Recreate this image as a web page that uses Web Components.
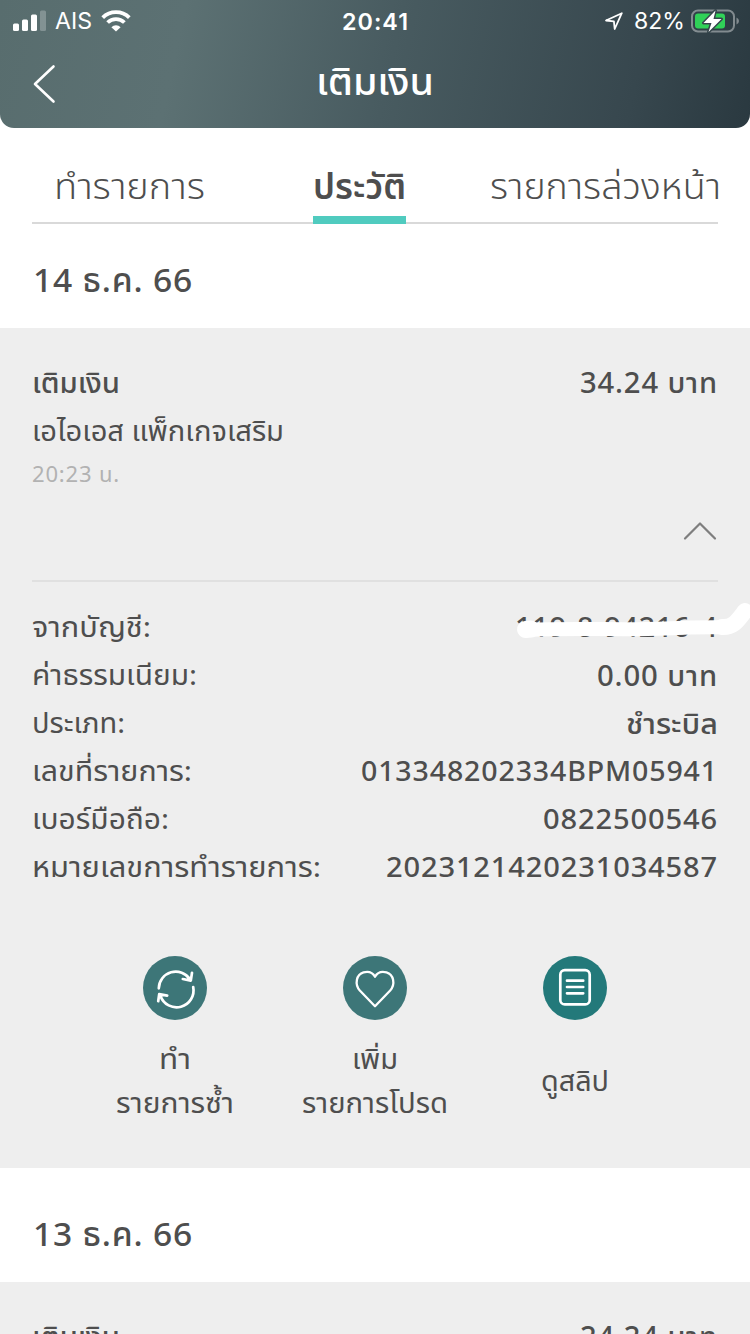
<!DOCTYPE html>
<html lang="th">
<head>
<meta charset="utf-8">
<title>เติมเงิน</title>
<style>
  body {
    margin: 0;
    width: 750px;
    height: 1334px;
    overflow: hidden;
    background: #fff;
    color: #4e4e4e;
    font-family: "Noto Sans", "Noto Sans Thai", "Open Sans", sans-serif;
  }
</style>
</head>
<body>
<topup-screen></topup-screen>

<script>
// Single line of text squeezed or stretched to the width it is given
class TextRun extends HTMLElement {
  constructor() {
    super();
    this.attachShadow({ mode: 'open' });
    this.shadowRoot.innerHTML = `
      <style>
        :host { display: inline-block; white-space: nowrap; flex: none; }
        span { display: inline-block; transform-origin: 0 50%; }
      </style>
      <span><slot></slot></span>
    `;
  }
  connectedCallback() {
    const width = Number(this.getAttribute('width'));
    const size = this.getAttribute('size');
    const weight = this.getAttribute('weight');
    const spacing = this.getAttribute('spacing');
    if (size) this.style.fontSize = `${size}px`;
    if (weight) this.style.fontWeight = weight;
    if (spacing) this.style.letterSpacing = `${spacing}px`;
    if (!width) return;
    const span = this.shadowRoot.querySelector('span');
    const natural = span.getBoundingClientRect().width;
    this.style.width = `${width}px`;
    if (natural) span.style.transform = `scaleX(${width / natural})`;
  }
}
customElements.define('text-run', TextRun);

class StatusBar extends HTMLElement {
  constructor() {
    super();
    this.attachShadow({ mode: 'open' });
    this.shadowRoot.innerHTML = `
      <style>
        :host {
          display: grid;
          grid-template-columns: 1fr auto 1fr;
          align-items: center;
          height: 40px;
          padding: 0 11px 0 13px;
          line-height: 40px;
          color: #fff;
          font-family: Inter, "Liberation Sans", sans-serif;
        }
        div { display: flex; align-items: center; }
        svg { display: block; flex: none; }
        .left { gap: 9px; }
        .time { margin: 2px 2px 0 0; }
        .right { justify-content: flex-end; }
        .arrow { margin-right: 11px; }
        .battery { margin-left: 6px; }
      </style>
      <div class="left">
        <svg width="33" height="22" viewBox="0 0 33 22" fill="#fff">
          <rect x="0" y="13.500" width="6" height="7.500" rx="1.500"/>
          <rect x="9" y="9.500" width="6" height="11.500" rx="1.500"/>
          <rect x="18" y="4.500" width="6" height="16.500" rx="1.500"/>
          <rect x="27" y="0.500" width="6" height="20.500" rx="1.500" opacity=".25"/>
        </svg>
        <text-run size="23" width="37">AIS</text-run>
        <svg width="30" height="22" viewBox="0 0 30 22" fill="none" stroke="#fff" stroke-width="3.800">
          <path d="M1.700 7.600a19 19 0 0 1 26.600 0"/>
          <path d="M6.600 12.500a12 12 0 0 1 16.800 0"/>
          <path d="M15 21.600l-4.600-4.400a6.500 6.500 0 0 1 9.200 0z" fill="#fff" stroke="none"/>
        </svg>
      </div>
      <text-run class="time" size="23" weight="600" spacing="1" width="67">20:41</text-run>
      <div class="right">
        <svg class="arrow" width="18" height="18" viewBox="0 0 18 18" fill="none" stroke="#fff" stroke-width="1.800" stroke-linejoin="round">
          <path d="M1 8.500L16.800 1.200 9.700 17 8.900 9.300z"/>
        </svg>
        <text-run size="23" width="51">82%</text-run>
        <svg class="battery" width="48" height="24" viewBox="0 0 48 24">
          <rect x="1" y="1.500" width="42" height="21" rx="6" fill="none" stroke="#fff" stroke-opacity=".4" stroke-width="2"/>
          <path d="M45.500 8.500v7q2.500-1 2.500-3.500t-2.500-3.500z" fill="#fff" fill-opacity=".4"/>
          <rect x="4" y="4.500" width="30" height="15" rx="3" fill="#30d158"/>
          <path d="M24.500 1.500L12.500 14h8l-3 9L30.500 10h-8z" fill="#fff" stroke="#36464c" stroke-width="3" paint-order="stroke" stroke-linejoin="round"/>
        </svg>
      </div>
    `;
  }
}
customElements.define('status-bar', StatusBar);

class AppHeader extends HTMLElement {
  constructor() {
    super();
    this.attachShadow({ mode: 'open' });
    this.shadowRoot.innerHTML = `
      <style>
        :host {
          display: block;
          height: 128px;
          border-radius: 0 0 14px 14px;
          background: linear-gradient(102deg, #586d6e 0%, #5c7173 24%, #485b60 52%, #37474e 84%, #2a3940 100%);
          color: #fff;
        }
        nav {
          display: grid;
          grid-template-columns: 150px 1fr 150px;
          align-items: center;
          justify-items: center;
          height: 88px;
        }
        svg { justify-self: start; margin-left: 32px; }
        text-run { margin-bottom: 2px; }
      </style>
      <status-bar></status-bar>
      <nav>
        <svg width="24" height="40" viewBox="0 0 24 40" fill="none" stroke="#fff" stroke-width="2.600" stroke-linecap="round" stroke-linejoin="round">
          <path d="M21.500 2.500L3 20l18.500 17.500"/>
        </svg>
        <text-run size="38" weight="500" width="118"><slot></slot></text-run>
      </nav>
    `;
  }
}
customElements.define('app-header', AppHeader);

class TabBar extends HTMLElement {
  constructor() {
    super();
    this.attachShadow({ mode: 'open' });
    this.shadowRoot.innerHTML = `
      <style>
        :host {
          display: grid;
          grid-template-columns: 259px 177px 230px;
          justify-items: start;
          box-sizing: border-box;
          height: 96px;
          margin: 0 32px;
          padding-left: 22px;
          border-bottom: 2px solid #d9d9d9;
        }
      </style>
      <slot></slot>
    `;
  }
}
customElements.define('tab-bar', TabBar);

class TabItem extends HTMLElement {
  constructor() {
    super();
    this.attachShadow({ mode: 'open' });
    this.shadowRoot.innerHTML = `
      <style>
        :host {
          display: block;
          box-sizing: border-box;
          height: 96px;
          padding-top: 29px;
          line-height: 58px;
          font-weight: 300;
        }
        :host([selected]) { border-bottom: 8px solid #50cbbf; }
      </style>
      <slot></slot>
    `;
  }
}
customElements.define('tab-item', TabItem);

class DateHeading extends HTMLElement {
  constructor() {
    super();
    this.attachShadow({ mode: 'open' });
    this.shadowRoot.innerHTML = `
      <style>
        :host {
          display: block;
          height: 104px;
          padding-left: 33px;
          line-height: 112px;
        }
        :host([compact]) { height: 114px; line-height: 132px; }
      </style>
      <text-run size="33" weight="500" spacing=".8" width="160"><slot></slot></text-run>
    `;
  }
}
customElements.define('date-heading', DateHeading);

class TransactionCard extends HTMLElement {
  constructor() {
    super();
    this.attachShadow({ mode: 'open' });
    this.shadowRoot.innerHTML = `
      <style>
        :host {
          display: block;
          box-sizing: border-box;
          height: 840px;
          padding: 30px 32px 0;
          background: #eee;
        }
        .line { display: flex; justify-content: space-between; height: 48px; line-height: 48px; }
        .time { height: 40px; line-height: 38px; color: #b2b2b2; }
        .toggle {
          display: flex;
          justify-content: flex-end;
          box-sizing: border-box;
          height: 88px;
          padding-top: 26px;
          border-bottom: 2px solid #e0e0e0;
        }
        .details { padding-top: 20px; }
      </style>
      <div class="line">
        <text-run size="28" weight="500" width="88">เติมเงิน</text-run>
        <text-run size="28" weight="500" spacing=".8" width="138"><slot name="amount"></slot></text-run>
      </div>
      <div class="line"><text-run size="28" width="252">เอไอเอส แพ็กเกจเสริม</text-run></div>
      <div class="time"><text-run size="22" spacing=".8" width="88">20:23 น.</text-run></div>
      <div class="toggle">
        <svg width="36" height="22" viewBox="0 0 36 22" fill="none" stroke="#7e7e7e" stroke-width="2.200" stroke-linecap="round" stroke-linejoin="round">
          <path d="M3 18.500L18 3.500l15 15"/>
        </svg>
      </div>
      <div class="details"><slot></slot></div>
      <slot name="actions"></slot>
    `;
  }
}
customElements.define('transaction-card', TransactionCard);

class DetailRow extends HTMLElement {
  constructor() {
    super();
    this.attachShadow({ mode: 'open' });
    this.shadowRoot.innerHTML = `
      <style>
        :host { display: flex; justify-content: space-between; position: relative; height: 48px; line-height: 48px; }
        ::slotted([slot="value"]) { margin-top: 1px; }
        ::slotted(svg) { position: absolute; left: 483px; top: 0; }
      </style>
      <slot></slot>
      <slot name="value"></slot>
      <slot name="marker"></slot>
    `;
  }
}
customElements.define('detail-row', DetailRow);

class ActionButton extends HTMLElement {
  constructor() {
    super();
    this.attachShadow({ mode: 'open' });
    const icons = {
      repeat: '<path d="M15.800 32.300A17 17 0 0 1 47 23.300M39.800 23l8 1.600 1.200-7.800M50.200 31A17 17 0 0 1 17.500 40M24.200 39.600l-8-1.400-1 7"/>',
      heart: '<path stroke-width="2.300" d="M32 50.200L16.800 34.500C11.300 28 13.400 18.300 20.500 16.300c5-1.300 9.300.3 11.500 4.400 2.200-4.100 6.500-5.700 11.500-4.400 7.100 2 9.200 11.700 3.700 18.200z"/>',
      slip: '<rect x="17.300" y="14.200" width="29.400" height="34.200" rx="4.500"/><path d="M24 24.700h16.200M24 31h16.200M24 37.300h16.200"/>'
    };
    const name = this.getAttribute('icon');
    this.shadowRoot.innerHTML = `
      <style>
        :host { display: flex; flex-direction: column; align-items: center; width: 200px; }
        svg { display: block; border-radius: 50%; background: ${name === 'slip' ? '#23797a' : '#3d7678'}; }
        .label {
          display: flex;
          flex-direction: column;
          align-items: center;
          justify-content: center;
          height: 88px;
          margin-top: 16px;
          line-height: 44px;
        }
      </style>
      <svg width="64" height="64" viewBox="0 0 64 64" fill="none" stroke="#fff" stroke-width="2.700" stroke-linecap="round" stroke-linejoin="round">${icons[name]}</svg>
      <div class="label"><slot></slot></div>
    `;
  }
}
customElements.define('action-button', ActionButton);

class TopupScreen extends HTMLElement {
  constructor() {
    super();
    this.attachShadow({ mode: 'open' });
    this.shadowRoot.innerHTML = `
      <style>
        :host { display: block; height: 1334px; overflow: hidden; }
        .actions { display: flex; margin: 66px 11px 0 43px; }
        .peek { height: 52px; overflow: hidden; }
      </style>
      <app-header>เติมเงิน</app-header>
      <tab-bar>
        <tab-item><text-run size="36" width="151">ทำรายการ</text-run></tab-item>
        <tab-item selected><text-run size="36" weight="600" width="93">ประวัติ</text-run></tab-item>
        <tab-item><text-run size="36" width="231">รายการล่วงหน้า</text-run></tab-item>
      </tab-bar>
      <date-heading>14 ธ.ค. 66</date-heading>
      <transaction-card>
        <span slot="amount">34.24 บาท</span>
        <detail-row>
          <text-run size="28" width="119">จากบัญชี:</text-run>
          <text-run slot="value" size="27" weight="500" spacing=".8" width="203">119-8-94216-4</text-run>
          <svg slot="marker" width="235" height="48" viewBox="0 0 235 48" fill="none" stroke="#fff" stroke-linecap="round" stroke-linejoin="round">
            <path stroke-width="17" d="M10.500 27.500L16 27"/>
            <path stroke-width="14" d="M12 28C60 25.500 110 28.500 150 26.500S195 25.500 213 25"/>
            <path stroke-width="16" d="M207 25C219 25.500 223 18 230 9"/>
          </svg>
        </detail-row>
        <detail-row>
          <text-run size="28" width="165">ค่าธรรมเนียม:</text-run>
          <text-run slot="value" size="28" weight="500" spacing=".8" width="121">0.00 บาท</text-run>
        </detail-row>
        <detail-row>
          <text-run size="28" width="93">ประเภท:</text-run>
          <text-run slot="value" size="28" weight="500" width="92">ชำระบิล</text-run>
        </detail-row>
        <detail-row>
          <text-run size="28" width="160">เลขที่รายการ:</text-run>
          <text-run slot="value" size="27" weight="500" spacing=".8" width="357">013348202334BPM05941</text-run>
        </detail-row>
        <detail-row>
          <text-run size="28" width="137">เบอร์มือถือ:</text-run>
          <text-run slot="value" size="27" weight="500" spacing=".8" width="175">0822500546</text-run>
        </detail-row>
        <detail-row>
          <text-run size="28" width="289">หมายเลขการทำรายการ:</text-run>
          <text-run slot="value" size="27" weight="500" spacing=".8" width="332">2023121420231034587</text-run>
        </detail-row>
        <div class="actions" slot="actions">
          <action-button icon="repeat">
            <text-run size="28" width="32">ทำ</text-run>
            <text-run size="28" width="118">รายการซ้ำ</text-run>
          </action-button>
          <action-button icon="heart">
            <text-run size="28" width="46">เพิ่ม</text-run>
            <text-run size="28" width="146">รายการโปรด</text-run>
          </action-button>
          <action-button icon="slip">
            <text-run size="28" width="68">ดูสลิป</text-run>
          </action-button>
        </div>
      </transaction-card>
      <date-heading compact>13 ธ.ค. 66</date-heading>
      <transaction-card class="peek">
        <span slot="amount">24.24 บาท</span>
      </transaction-card>
    `;
  }
}
customElements.define('topup-screen', TopupScreen);
</script>
</body>
</html>
